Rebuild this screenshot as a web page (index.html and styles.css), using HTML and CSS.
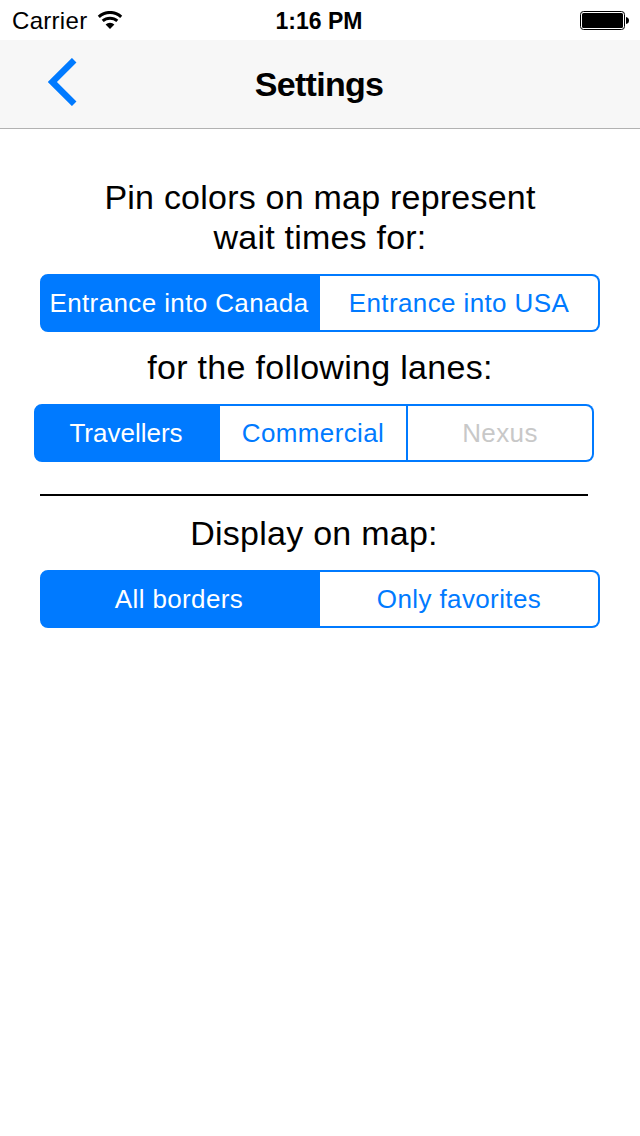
FILE: index.html
```
<!DOCTYPE html>
<html lang="en">
  <head>
    <meta charset="UTF-8" />
    <meta name="viewport" content="width=device-width, initial-scale=1.0" />
    <title>Settings</title>
    <link rel="stylesheet" href="styles.css">
  </head>
  <body>
    <div class="status-bar">
      <div class="carrier">
        <span>Carrier</span>
        <svg class="wifi" width="26" height="18" viewBox="0 0 26 18">
          <path d="M1.8 5.8 A16.5 16.5 0 0 1 24.2 5.8" />
          <path d="M5.7 9.9 A11 11 0 0 1 20.3 9.9" />
          <path class="dot" d="M13 18 L8.6 13.6 A6.2 6.2 0 0 1 17.4 13.6 Z" />
        </svg>
      </div>
      <div class="time">1:16 PM</div>
      <div class="battery">
        <svg width="49" height="19" viewBox="0 0 49 19">
          <rect class="shell" x="0.5" y="0.5" width="44" height="18" rx="3" />
          <rect x="2" y="2" width="41" height="15" rx="1.5" />
          <path d="M46 6 Q49 6.5 49 9.5 Q49 12.5 46 13 Z" />
        </svg>
      </div>
    </div>

    <header class="nav-bar">
      <button class="back" aria-label="Back">
        <svg width="30" height="48" viewBox="0 0 30 48">
          <path d="M26.2 2.2 L4.4 24 L26.2 45.8" />
        </svg>
      </button>
      <h1>Settings</h1>
    </header>

    <main class="settings">
      <h2>Pin colors on map represent<br>wait times for:</h2>
      <div class="segments">
        <button class="active">Entrance into Canada</button>
        <button>Entrance into USA</button>
      </div>

      <h2 class="lanes-title">for the following lanes:</h2>
      <div class="segments lanes">
        <button class="active">Travellers</button>
        <button>Commercial</button>
        <button disabled>Nexus</button>
      </div>

      <hr>

      <h2 class="display-title">Display on map:</h2>
      <div class="segments">
        <button class="active">All borders</button>
        <button>Only favorites</button>
      </div>
    </main>

    <script>
      // one active button per segmented control
      document.querySelectorAll('.segments').forEach((group) => {
        group.addEventListener('click', (e) => {
          if (e.target.tagName !== 'BUTTON') return;
          group.querySelector('.active').classList.remove('active');
          e.target.classList.add('active');
        });
      });
    </script>
  </body>
</html>
```
FILE: styles.css
```
* {
  box-sizing: border-box;
}

body {
  margin: 0;
  min-height: 100vh;
  background: #fff;
  color: #000;
  font-family: "Liberation Sans", Arial, sans-serif;
}

button {
  margin: 0;
  padding: 0;
  border: none;
  background: none;
  font-family: inherit;
  cursor: pointer;
}

svg {
  display: block;
}

/* status bar */
.status-bar {
  display: grid;
  grid-template-columns: 1fr auto 1fr;
  align-items: center;
  height: 40px;
  padding: 0 11px 0 12px;
  font-size: 24px;
  line-height: 40px;
}

.carrier {
  display: flex;
  align-items: center;
  gap: 10px;
}

.carrier span {
  padding-top: 2px;
  line-height: 38px;
  letter-spacing: 0.3px;
}

.wifi path {
  fill: none;
  stroke: #000;
  stroke-width: 3;
}

.wifi .dot {
  fill: #000;
  stroke: none;
}

.time {
  padding: 2px 3px 0 0;
  font-weight: bold;
  font-size: 23px;
  line-height: 38px;
}

.battery {
  justify-self: end;
}

.battery .shell {
  fill: none;
  stroke: #000;
}

/* nav bar */
.nav-bar {
  display: grid;
  grid-template-columns: 80px 1fr 82px;
  align-items: center;
  height: 89px;
  background: #f7f7f7;
  border-bottom: 1px solid #b2b2b2;
}

.back {
  justify-self: end;
  padding: 0 2px 4px 0;
}

.back path {
  fill: none;
  stroke: #007aff;
  stroke-width: 6.4;
}

.nav-bar h1 {
  margin: 0;
  font-size: 34px;
  line-height: 40px;
  letter-spacing: -0.7px;
  text-align: center;
}

/* settings */
.settings {
  padding: 48px 40px 0;
}

.settings h2 {
  margin: 0 0 17px;
  font-size: 34px;
  font-weight: normal;
  line-height: 40px;
  letter-spacing: 0.22px;
  text-align: center;
}

.settings .lanes-title {
  letter-spacing: 0.3px;
}

/* centered over the divider, not the full column */
.settings .display-title {
  margin-right: 12px;
  letter-spacing: 0.25px;
}

.segments {
  display: grid;
  grid-template-columns: 1fr 1fr;
  height: 58px;
  margin-bottom: 15px;
}

.segments button {
  border: 2px solid #007aff;
  border-left: none;
  color: #007aff;
  font-size: 26px;
  letter-spacing: 0.38px;
  white-space: nowrap;
}

.segments button:first-child {
  padding-right: 2px;
  border-left: 2px solid #007aff;
  border-radius: 8px 0 0 8px;
}

.segments button:last-child {
  border-radius: 0 8px 8px 0;
}

.segments .active {
  background: #007aff;
  color: #fff;
}

.segments button:disabled {
  color: #c8c8c8;
}

/* three lanes, sits a little left of the others */
.lanes {
  grid-template-columns: 186px 188px 186px;
  margin: 0 6px 32px -6px;
}

.lanes .active {
  letter-spacing: 0;
}

hr {
  height: 2px;
  margin: 0 12px 17px 0;
  border: none;
  background: #000;
}
```
